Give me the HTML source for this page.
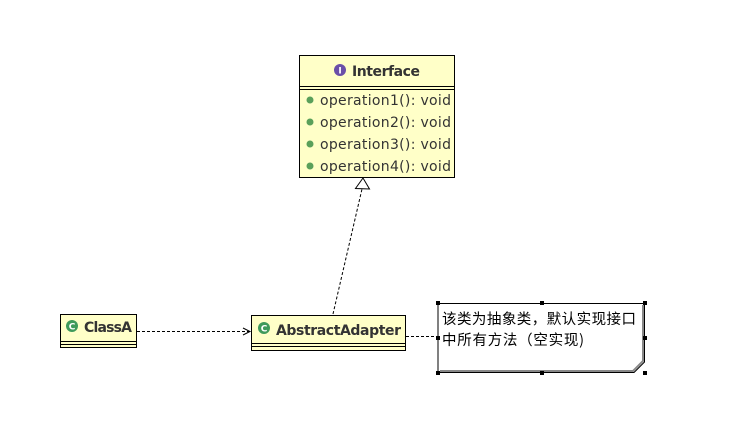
<!DOCTYPE html>
<html><head><meta charset="utf-8"><style>
html,body{margin:0;padding:0;background:#fff;width:751px;height:440px;overflow:hidden}
svg text{font-family:"DejaVu Sans","Liberation Sans","Noto Sans CJK SC",sans-serif}
</style></head><body>
<svg width="751" height="440" xmlns="http://www.w3.org/2000/svg">
<!-- Interface -->
<rect x="299.5" y="55.5" width="155" height="122" fill="#ffffc8" stroke="#000"/>
<line x1="300" y1="86.5" x2="454" y2="86.5" stroke="#000"/>
<line x1="300" y1="89.5" x2="454" y2="89.5" stroke="#000"/>
<circle cx="340" cy="70" r="6" fill="#6a4fa8"/>
<text x="340" y="73.5" font-size="9" font-weight="bold" fill="#fff" text-anchor="middle">I</text>
<text x="352" y="76" font-size="14" font-weight="bold" fill="#333" textLength="68">Interface</text>
<g font-size="14" fill="#333">
<circle cx="310" cy="100" r="3.5" fill="#5aa05a"/><text x="320" y="105" textLength="131">operation1(): void</text>
<circle cx="310" cy="122" r="3.5" fill="#5aa05a"/><text x="320" y="127" textLength="131">operation2(): void</text>
<circle cx="310" cy="144" r="3.5" fill="#5aa05a"/><text x="320" y="149" textLength="131">operation3(): void</text>
<circle cx="310" cy="166" r="3.5" fill="#5aa05a"/><text x="320" y="171" textLength="131">operation4(): void</text>
</g>
<!-- realization -->
<line x1="333" y1="314" x2="362" y2="189" stroke="#000" stroke-dasharray="3,2"/>
<polygon points="363,178 355.5,188.5 369.5,189" fill="#fff" stroke="#000"/>
<!-- ClassA -->
<rect x="60.5" y="314.5" width="76" height="33" fill="#ffffc8" stroke="#000"/>
<line x1="61" y1="341.5" x2="136" y2="341.5" stroke="#000"/>
<line x1="61" y1="344.5" x2="136" y2="344.5" stroke="#000"/>
<circle cx="72" cy="326" r="6" fill="#3f9a5a"/>
<text x="72" y="329.5" font-size="9" font-weight="bold" fill="#fff" text-anchor="middle">C</text>
<text x="84" y="332" font-size="14" font-weight="bold" fill="#333" textLength="48">ClassA</text>
<!-- dependency -->
<line x1="137" y1="331.5" x2="250" y2="331.5" stroke="#000" stroke-dasharray="3,2"/>
<polyline points="243,328 250,331.5 243,335" fill="none" stroke="#000"/>
<!-- AbstractAdapter -->
<rect x="251.5" y="315.5" width="154" height="35" fill="#ffffc8" stroke="#000"/>
<line x1="252" y1="343.5" x2="405" y2="343.5" stroke="#000"/>
<line x1="252" y1="346.5" x2="405" y2="346.5" stroke="#000"/>
<circle cx="264" cy="328" r="6" fill="#3f9a5a"/>
<text x="264" y="331.5" font-size="9" font-weight="bold" fill="#fff" text-anchor="middle">C</text>
<text x="276" y="335" font-size="14" font-weight="bold" fill="#333" textLength="125">AbstractAdapter</text>
<line x1="406" y1="336.5" x2="437" y2="336.5" stroke="#000" stroke-dasharray="3,2"/>
<!-- Note -->
<path d="M438 303.5 H644.5 V362 L634 372.5 H438 Z" fill="#fff" stroke="#000"/>
<path d="M643 305 V361 L633 371 H440" fill="none" stroke="#888" stroke-width="2"/>
<g fill="#000">
<rect x="436" y="301" width="4" height="4"/><rect x="540" y="301" width="4" height="4"/><rect x="643" y="301" width="4" height="4"/>
<rect x="436" y="336" width="4" height="4"/><rect x="643" y="336" width="4" height="4"/>
<rect x="436" y="371" width="4" height="4"/><rect x="540" y="371" width="4" height="4"/><rect x="643" y="371" width="4" height="4"/>
</g>
<text x="442" y="324" font-size="14.5" fill="#000" style="font-family:'Noto Sans CJK SC',sans-serif" textLength="194">该类为抽象类，默认实现接口</text>
<text x="442" y="345" font-size="14.5" fill="#000" style="font-family:'Noto Sans CJK SC',sans-serif" textLength="142">中所有方法（空实现)</text>
</svg>
</body></html>
